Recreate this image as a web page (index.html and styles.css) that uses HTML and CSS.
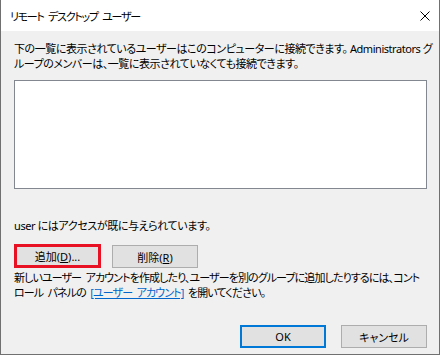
FILE: index.html
```html
<!DOCTYPE html>
<html lang="ja">
<head>
  <meta charset="UTF-8">
  <title>リモート デスクトップ ユーザー</title>
  <link rel="stylesheet" href="styles.css">
</head>
<body>
  <div class="window">
    <div class="titlebar">
      <span class="title">リモート デスクトップ ユーザー</span>
      <svg class="close" width="10" height="10" viewBox="0 0 10 10">
        <path d="M0.5 0.5 L9.5 9.5 M9.5 0.5 L0.5 9.5" stroke="#000" stroke-width="1" fill="none"/>
      </svg>
    </div>

    <div class="content">
      <p class="desc">下の一覧に表示されているユーザーはこのコンピューターに接続できます。 Administrators グ<br>ループのメンバーは、一覧に表示されていなくても接続できます。</p>

      <div class="listbox"></div>

      <p class="access">user にはアクセスが既に与えられています。</p>

      <div class="row-buttons">
        <button class="btn btn-add">追加(<u>D</u>)...</button>
        <button class="btn btn-remove">削除(<u>R</u>)</button>
      </div>

      <p class="hint">新しいユーザー アカウントを作成したり、ユーザーを別のグループに追加したりするには、コント<br>ロール パネルの <a href="#" class="link">[ユーザー アカウント]</a> を開いてください。</p>

      <div class="footer">
        <button class="btn btn-ok">OK</button>
        <button class="btn">キャンセル</button>
      </div>
    </div>
  </div>
</body>
</html>
```

FILE: styles.css
```css
html, body {
  margin: 0;
  padding: 0;
}
body {
  font-family: 'Noto Sans', 'Noto Sans CJK JP', sans-serif;
  font-size: 11px;
  font-feature-settings: "palt";
  color: #000;
  background: #fff;
}
.window {
  width: 440px;
  height: 355px;
  box-sizing: border-box;
  border: 1px solid #707070;
  border-top: none;
  background: #f0f0f0;
  display: flex;
  flex-direction: column;
}
.titlebar {
  height: 31px;
  background: #fff;
  display: flex;
  align-items: center;
  justify-content: space-between;
  padding: 0 9px 0 9px;
  flex-shrink: 0;
}
.title {
  font-size: 11px;
  letter-spacing: -1.3px;
  word-spacing: 3px;
}
.content {
  flex: 1;
  display: flex;
  flex-direction: column;
  padding: 10px 12px 0 13px;
}
p {
  margin: 0;
  line-height: 15px;
  white-space: nowrap;
}
.desc {
  letter-spacing: -0.45px;
}
.listbox {
  margin-top: 9px;
  height: 107px;
  background: #fff;
  border: 1px solid #828790;
}
.access {
  margin-top: 29px;
  letter-spacing: -0.4px;
}
.row-buttons {
  display: flex;
  align-items: flex-start;
  gap: 11px;
  margin-top: 11px;
}
.btn {
  font-family: inherit;
  font-size: 11px;
  font-feature-settings: "palt";
  width: 86px;
  height: 23px;
  padding: 0;
  background: #e1e1e1;
  border: 1px solid #adadad;
  color: #000;
  box-sizing: border-box;
}
.btn u {
  text-decoration: underline;
}
.btn-add {
  width: 87px;
  height: 24px;
  border: 3px solid #e81123;
}
.btn-remove {
  margin-top: 1px;
}
.hint {
  margin-top: 2px;
  letter-spacing: -0.9px;
  word-spacing: 2.5px;
}
.link {
  color: #0066cc;
  text-decoration: underline;
}
.footer {
  display: flex;
  justify-content: flex-end;
  gap: 15px;
  margin-top: auto;
  margin-bottom: 6px;
}
.btn-ok {
  border: 2px solid #0078d7;
}
```
